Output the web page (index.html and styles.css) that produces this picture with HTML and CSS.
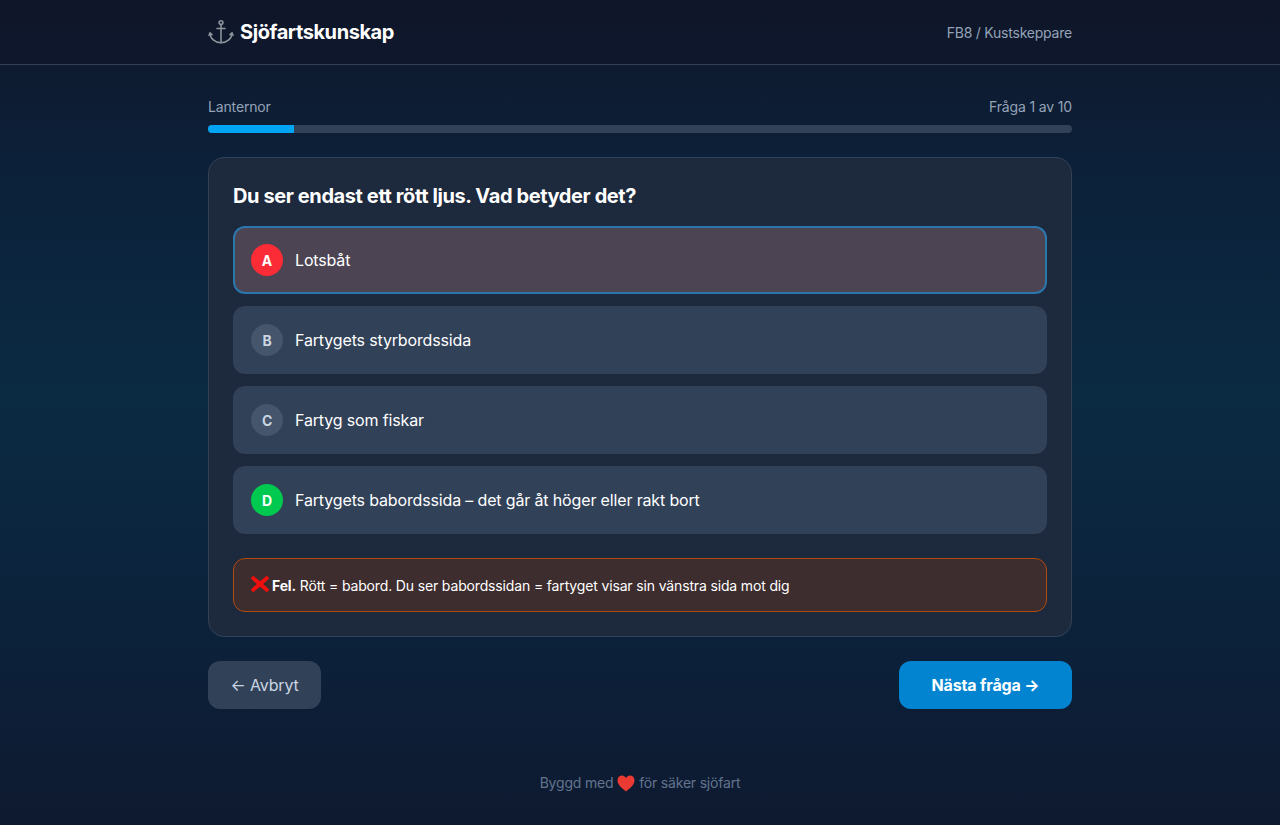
FILE: index.html
```html
<!DOCTYPE html>
<html>

<head>
  <title>Sjöfartskunskap</title>
  <link rel="stylesheet" href="styles.css">
</head>

<body>
  <header class="topbar">
    <div class="wrap topbar-inner">
      <div class="brand">
        <svg class="anchor" width="26" height="26" viewBox="0 0 26 26" fill="none" stroke="#8d949c" stroke-width="1.6" stroke-linecap="round">
          <circle cx="13" cy="3.6" r="1.9"/>
          <path d="M13 5.500V23.600"/>
          <path d="M9 9.500h8"/>
          <path d="M2 14.200c.2 5.400 4.800 9.400 11 9.600 6.200-.2 10.800-4.200 11-9.600"/>
          <path d="M1 16.300 2 14l2 1.600M25 16.300 24 14l-2 1.600"/>
        </svg>
        <span>Sjöfartskunskap</span>
      </div>
      <div class="level">FB8 / Kustskeppare</div>
    </div>
  </header>

  <main class="wrap">
    <div class="progress-text">
      <span>Lanternor</span>
      <span>Fråga 1 av 10</span>
    </div>
    <div class="progress-track">
      <div class="progress-fill" style="width: 10%"></div>
    </div>

    <section class="card">
      <h2 class="question">Du ser endast ett rött ljus. Vad betyder det?</h2>

      <div class="options">
        <div class="option option-wrong">
          <span class="letter letter-red">A</span>
          <span>Lotsbåt</span>
        </div>
        <div class="option">
          <span class="letter">B</span>
          <span>Fartygets styrbordssida</span>
        </div>
        <div class="option">
          <span class="letter">C</span>
          <span>Fartyg som fiskar</span>
        </div>
        <div class="option">
          <span class="letter letter-green">D</span>
          <span>Fartygets babordssida – det går åt höger eller rakt bort</span>
        </div>
      </div>

      <div class="feedback">
        <svg class="cross" width="20" height="18" viewBox="0 0 20 18">
          <path d="M3.200.8 10 6.300 16.800.8 19.400 3.300 13.200 9 19.400 14.700 16.800 17.200 10 11.700 3.200 17.200.6 14.700 6.800 9 .6 3.300z" fill="#ee0f0f"/>
        </svg>
        <span><b>Fel.</b> Rött = babord. Du ser babordssidan = fartyget visar sin vänstra sida mot dig</span>
      </div>
    </section>

    <div class="actions">
      <button class="btn btn-back" type="button">← Avbryt</button>
      <button class="btn btn-next" type="button">Nästa fråga →</button>
    </div>
  </main>

  <footer class="footer">
    Byggd med
    <svg class="heart" width="18" height="17" viewBox="0 0 18 17">
      <path d="M9 16.500C5 13.500.5 10 .5 5.300.5 2.500 2.600.6 5 .6c1.700 0 3.200.9 4 2.400C9.800 1.500 11.300.6 13 .6c2.400 0 4.500 1.900 4.500 4.700C17.500 10 13 13.500 9 16.500z" fill="#ea3a32"/>
    </svg>
    för säker sjöfart
  </footer>
</body>

</html>
```

FILE: styles.css
```css
* {
  box-sizing: border-box;
}

body {
  margin: 0;
  height: 825px;
  overflow: hidden;
  font-family: Inter, "Noto Sans", sans-serif;
  color: #fff;
  background: linear-gradient(180deg, #0f172a 0%, #0c2039 20%, #0b2b43 48%, #0c2039 80%, #0e1a30 100%);
}

.wrap {
  width: 864px;
  margin: 0 auto;
}

.topbar {
  height: 65px;
  background-color: rgba(15, 23, 42, 0.8);
  border-bottom: 1px solid #334155;
}

.topbar-inner {
  display: flex;
  justify-content: space-between;
  align-items: center;
  height: 64px;
}

.brand {
  display: flex;
  align-items: center;
  gap: 6px;
  font-size: 20px;
  font-weight: 700;
  letter-spacing: -0.43px;
}

.level {
  font-size: 14px;
  letter-spacing: -0.22px;
  color: #94a3b8;
}

main {
  padding-top: 32px;
}

.progress-text {
  display: flex;
  justify-content: space-between;
  font-size: 14px;
  line-height: 20px;
  letter-spacing: -0.15px;
  color: #94a3b8;
  margin-bottom: 8px;
}

.progress-track {
  height: 8px;
  background-color: #314158;
  border-radius: 4px;
  overflow: hidden;
}

.progress-fill {
  height: 100%;
  background-color: #00a6f4;
}

.card {
  margin-top: 24px;
  padding: 24px;
  height: 480px;
  background-color: #1d293d;
  border: 1px solid #314158;
  border-radius: 16px;
}

.question {
  margin: 0 0 16px;
  font-size: 20px;
  line-height: 28px;
  font-weight: 700;
  letter-spacing: -0.4px;
}

.options {
  display: flex;
  flex-direction: column;
  gap: 12px;
}

.option {
  display: flex;
  align-items: center;
  gap: 12px;
  height: 68px;
  padding: 0 16px;
  font-size: 16px;
  font-weight: 400;
  letter-spacing: -0.15px;
  background-color: #314158;
  border: 2px solid #314158;
  border-radius: 12px;
}

.option-wrong {
  background-color: #4c4452;
  border-color: #2b76ac;
}

.letter {
  display: flex;
  justify-content: center;
  align-items: center;
  width: 32px;
  height: 32px;
  border-radius: 50%;
  font-size: 14px;
  font-weight: 700;
  color: #cad5e2;
  background-color: #45556c;
}

.letter-red {
  color: #fff;
  background-color: #fb2c36;
}

.letter-green {
  color: #fff;
  background-color: #00c950;
}

.feedback {
  display: flex;
  align-items: center;
  gap: 2px;
  height: 54px;
  margin-top: 24px;
  padding: 0 16px;
  font-size: 14px;
  letter-spacing: -0.15px;
  background-color: #3d2d2e;
  border: 1px solid #b04a0e;
  border-radius: 12px;
}

.cross {
  margin-top: -3px;
}

.actions {
  display: flex;
  justify-content: space-between;
  margin-top: 24px;
}

.btn {
  height: 48px;
  border: none;
  border-radius: 12px;
  font-family: inherit;
  font-size: 16px;
}

.btn-back {
  width: 113px;
  font-weight: 400;
  letter-spacing: -0.15px;
  color: #cad5e2;
  background-color: #314158;
}

.btn-next {
  width: 173px;
  font-weight: 700;
  letter-spacing: -0.15px;
  color: #fff;
  background-color: #0284d0;
}

.footer {
  display: flex;
  justify-content: center;
  align-items: center;
  gap: 4px;
  margin-top: 64px;
  font-size: 14px;
  line-height: 20px;
  letter-spacing: -0.2px;
  color: #62748e;
}
```
